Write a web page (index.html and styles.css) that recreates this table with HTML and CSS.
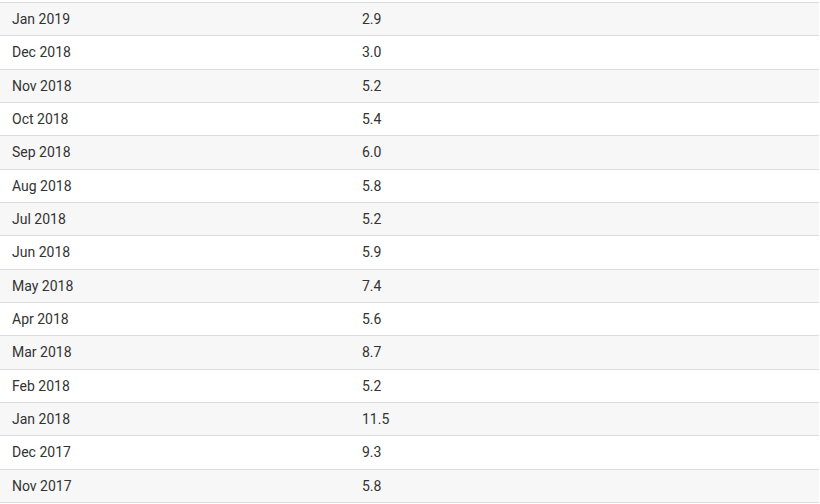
FILE: index.html
```html
<!DOCTYPE html>
<html>
<head>
<meta charset="utf-8">
<link rel="stylesheet" href="styles.css">
</head>
<body>
<div class="table">
  <div class="row"><div class="cell">Jan 2019</div><div class="cell">2.9</div></div>
  <div class="row"><div class="cell">Dec 2018</div><div class="cell">3.0</div></div>
  <div class="row"><div class="cell">Nov 2018</div><div class="cell">5.2</div></div>
  <div class="row"><div class="cell">Oct 2018</div><div class="cell">5.4</div></div>
  <div class="row"><div class="cell">Sep 2018</div><div class="cell">6.0</div></div>
  <div class="row"><div class="cell">Aug 2018</div><div class="cell">5.8</div></div>
  <div class="row"><div class="cell">Jul 2018</div><div class="cell">5.2</div></div>
  <div class="row"><div class="cell">Jun 2018</div><div class="cell">5.9</div></div>
  <div class="row"><div class="cell">May 2018</div><div class="cell">7.4</div></div>
  <div class="row"><div class="cell">Apr 2018</div><div class="cell">5.6</div></div>
  <div class="row"><div class="cell">Mar 2018</div><div class="cell">8.7</div></div>
  <div class="row"><div class="cell">Feb 2018</div><div class="cell">5.2</div></div>
  <div class="row"><div class="cell">Jan 2018</div><div class="cell">11.5</div></div>
  <div class="row"><div class="cell">Dec 2017</div><div class="cell">9.3</div></div>
  <div class="row"><div class="cell">Nov 2017</div><div class="cell">5.8</div></div>
</div>
</body>
</html>
```
FILE: styles.css
```css
html, body {
  margin: 0;
  padding: 0;
  background: #ffffff;
}
body {
  padding-top: 2px;
  font-family: Roboto, "Liberation Sans", sans-serif;
  font-size: 14px;
  color: #333333;
}
.table {
  width: 819px;
  border-top: 1px solid #dddddd;
}
.row {
  display: grid;
  grid-template-columns: 350px 1fr;
  height: 32.333px;
  align-items: center;
  border-bottom: 1px solid #dddddd;
}
.row:nth-child(odd) {
  background: #f7f7f7;
}
.cell {
  padding-left: 12px;
}
```
